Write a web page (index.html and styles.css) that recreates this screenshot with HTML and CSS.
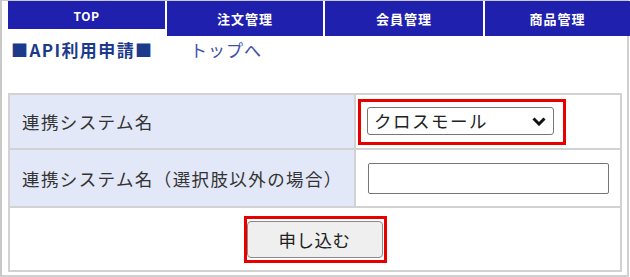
FILE: index.html
```html
<!DOCTYPE html>
<html lang="ja">
<head>
<meta charset="utf-8">
<title>API利用申請</title>
<link rel="stylesheet" href="styles.css">
</head>
<body>
<div class="frame">
  <nav class="tabs">
    <a class="tab tab-top" href="#">TOP</a>
    <a class="tab tab-order" href="#">注文管理</a>
    <a class="tab tab-member" href="#">会員管理</a>
    <a class="tab tab-product" href="#">商品管理</a>
  </nav>
  <div class="heading-row">
    <h1 class="heading">■API利用申請■</h1>
    <a class="home-link" href="#">トップへ</a>
  </div>
  <table class="form-table">
    <tr class="row-1">
      <th class="label">連携システム名</th>
      <td class="value">
        <span class="mark mark-select">
          <span class="select-wrap">
            <select class="select">
              <option>クロスモール</option>
            </select>
            <svg class="chevron" width="14" height="9" viewBox="0 0 14 9"><path d="M1.5 1.5 L7 7 L12.5 1.5" fill="none" stroke="#111" stroke-width="3"/></svg>
          </span>
        </span>
      </td>
    </tr>
    <tr class="row-2">
      <th class="label">連携システム名（選択肢以外の場合）</th>
      <td class="value value-input"><input class="text-input" type="text"></td>
    </tr>
    <tr class="row-3">
      <td class="submit-cell" colspan="2">
        <span class="mark mark-button"><button class="btn" type="button">申し込む</button></span>
      </td>
    </tr>
  </table>
</div>
</body>
</html>
```
FILE: styles.css
```css
html, body {
  margin: 0;
  padding: 0;
  background: #fff;
}
body {
  font-family: "Noto Sans CJK JP", "Noto Sans", sans-serif;
  color: #333;
  overflow: hidden;
}
.frame {
  box-sizing: border-box;
  width: 629px;
  height: 277px;
  border-top: 1px solid #c8c8c8;
  border-left: 2px solid #c8c8c8;
  border-right: 2px solid #d0d0d0;
  border-bottom: 2px solid #d0d0d0;
  padding-left: 6px;
}
.tabs {
  display: flex;
  align-items: flex-start;
  gap: 2px;
  margin-right: -3px;
  position: relative;
  z-index: 1;
}
.tab {
  display: flex;
  align-items: center;
  justify-content: center;
  height: 35px;
  background: #2020ae;
  color: #fff;
  text-decoration: none;
  font-size: 13px;
  font-weight: bold;
  letter-spacing: 1px;
}
.tab-top {
  width: 157px;
  height: 28px;
  font-size: 12px;
  letter-spacing: 0.5px;
}
.tab-order { width: 156px; }
.tab-member { width: 158px; }
.tab-product { flex: 1; }

.heading-row {
  display: flex;
  align-items: center;
  height: 24px;
  margin-top: 2px;
  padding-left: 3px;
}
.heading {
  margin: 0;
  font-size: 17px;
  font-weight: bold;
  color: #1c3a8c;
  line-height: 24px;
  width: 179px;
  letter-spacing: 1.4px;
}
.home-link {
  font-size: 17px;
  color: #3d4fa8;
  text-decoration: none;
  line-height: 24px;
  letter-spacing: 1px;
}

.form-table {
  margin-top: 31px;
  width: 614px;
  border-collapse: collapse;
  border: 2px solid #d2d2d2;
}
.form-table th,
.form-table td {
  border: 2px solid #d2d2d2;
  padding: 0;
  vertical-align: middle;
}
.label {
  width: 332px;
  background: #e3e8f8;
  text-align: left;
  font-weight: normal;
  font-size: 17.5px;
  color: #333;
  letter-spacing: 1.4px;
  padding-left: 12px !important;
}
.row-1 > * { height: 53px; }
.row-2 > * { height: 56px; }
.row-3 > * { height: 62px; }

.value {
  padding-left: 2px !important;
}
.value-input {
  padding-left: 12px !important;
}
.mark {
  display: inline-block;
  border: 3px solid #e60000;
  vertical-align: middle;
}
.mark-select {
  padding: 5px 9px 7px 6px;
}
.select-wrap {
  position: relative;
  display: block;
}
.select {
  -webkit-appearance: none;
  appearance: none;
  display: block;
  box-sizing: border-box;
  width: 187px;
  height: 28px;
  border: 1px solid #767676;
  border-radius: 3px;
  background: #fff;
  color: #222;
  font-family: "Noto Sans CJK JP", sans-serif;
  font-size: 17.5px;
  letter-spacing: 1.5px;
  padding: 0 0 0 6px;
  line-height: 26px;
  margin: 0;
}
.chevron {
  position: absolute;
  right: 8px;
  top: 10px;
  pointer-events: none;
}
.text-input {
  display: block;
  box-sizing: border-box;
  width: 241px;
  height: 31px;
  border: 1px solid #767676;
  border-radius: 2px;
  margin: 0;
}
.submit-cell {
  text-align: center;
}
.mark-button {
  padding: 2px 1px 2px 0;
}
.btn {
  display: block;
  box-sizing: border-box;
  width: 136px;
  height: 37px;
  border: 1px solid #8a8a8a;
  border-radius: 4px;
  background: #efefef;
  color: #222;
  font-family: "Noto Sans CJK JP", sans-serif;
  font-size: 17.5px;
  letter-spacing: 0.5px;
  padding: 0;
  margin: 0;
}
```
